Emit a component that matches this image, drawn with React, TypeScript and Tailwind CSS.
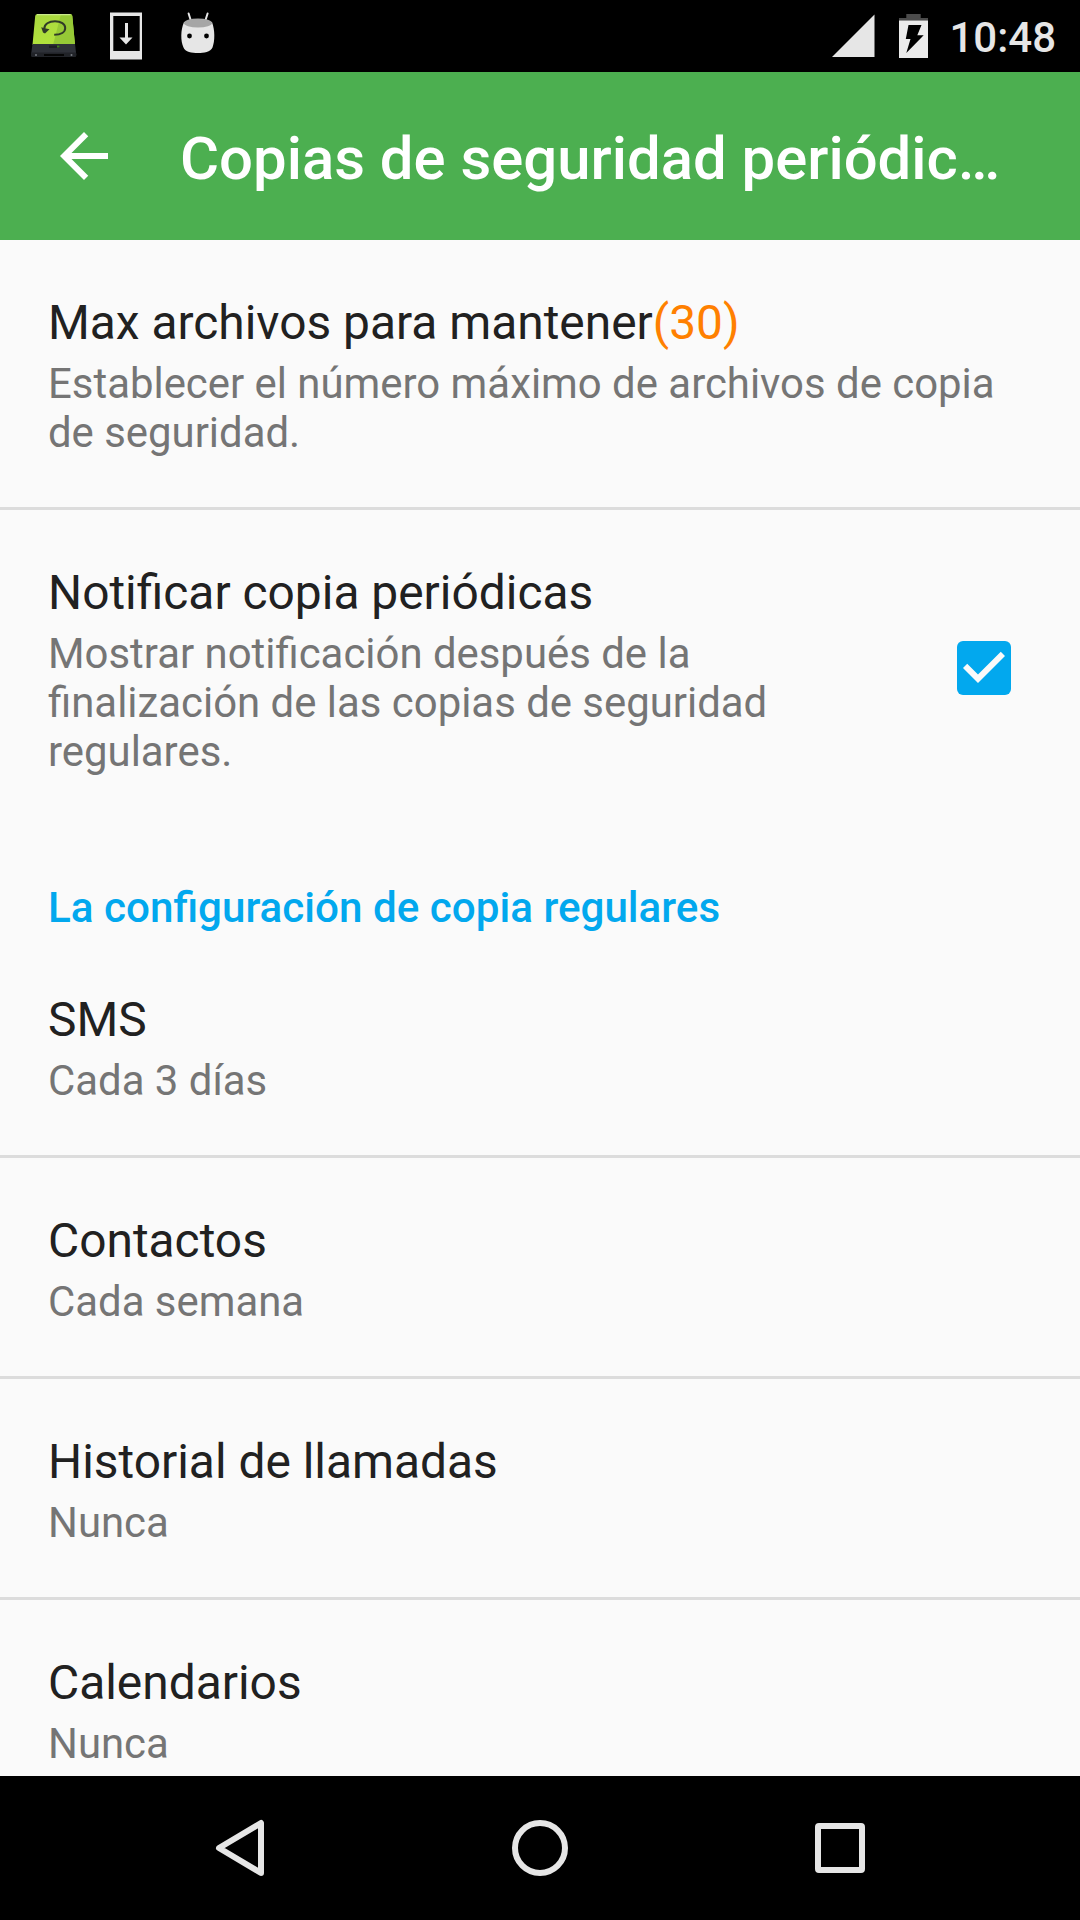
import type { ReactNode } from "react";

const schedules = [
  { title: "SMS", summary: "Cada 3 días" },
  { title: "Contactos", summary: "Cada semana" },
  { title: "Historial de llamadas", summary: "Nunca" },
  { title: "Calendarios", summary: "Nunca" },
];

const BackupDriveIcon = () => (
  <svg width="48" height="48" viewBox="0 0 48 48">
    <defs>
      <linearGradient id="drive" x1="0" y1="0" x2="0.3" y2="1">
        <stop offset="0" stopColor="#a9d83f" />
        <stop offset="1" stopColor="#b2e23c" />
      </linearGradient>
    </defs>
    <path d="M7.500 2h32.500q2 0 2.300 2l2.700 29H2.500L5.200 4q.3-2 2.300-2z" fill="url(#drive)" />
    <path d="M31 2h9q2 0 2.300 2l2.700 29H23z" fill="#96c936" />
    <path d="M7 2.700h33.500" stroke="#c9e98a" strokeWidth="1.300" />
    <path d="M2.500 32h42.500l1.300 11q0 2-2 2H3q-2 0-2-2z" fill="#2e3138" />
    <path d="M1.300 40.500h44.700l.3 2.500q0 2-2 2H3q-2 0-2-2z" fill="#212328" />
    <path d="M19 33.500h10.500v2.500H19z" fill="#1e2024" />
    <path d="M27 33.500h2.500v2H27z" fill="#3f7a1f" />
    <path d="M14 43h20" stroke="#050505" strokeWidth="2" />
    <circle cx="6" cy="43" r="1" fill="#777b82" />
    <circle cx="41.500" cy="43" r="1" fill="#777b82" />
    <path d="M14.200 17C14.200 12 19 9.200 25 9.200c6 0 10.200 3 10.200 6.800 0 4-4 6.800-11 6.800" fill="none" stroke="#303a28" strokeWidth="2" />
    <path d="M11.200 15.300l2.500.7 5.800 1.200-4.500 4.300-2-.9z" fill="#303a28" />
  </svg>
);

const DownloadIcon = () => (
  <svg width="34" height="48" viewBox="0 0 34 48">
    <path fillRule="evenodd" d="M0 .5h32v47H0zM3.300 4v35h26.400V4z" fill="#e6e6e6" />
    <path d="M15 11h3v14.500h4.500L16 32.500 9.500 25.500H15z" fill="#e6e6e6" />
  </svg>
);

const MarshmallowIcon = () => (
  <svg width="36" height="42" viewBox="0 0 36 42">
    <path d="M8.600 1.500L11 9M27.600 1.500L25.200 9" stroke="#e6e6e6" strokeWidth="2" strokeLinecap="round" />
    <path d="M4 10C.5 18 .5 29 3.500 35.500 5 40 12 41 18 41s12.500-1 14.500-5.500C35 29 35 18 32 10z" fill="#e6e6e6" />
    <ellipse cx="18" cy="11" rx="14" ry="4.500" fill="#a6a6a6" />
    <circle cx="9.500" cy="24" r="2.400" fill="#000" />
    <circle cx="26.500" cy="24" r="2.400" fill="#000" />
  </svg>
);

const StatusBar = () => (
  <header className="h-[72px] shrink-0 bg-black pl-[30px] pr-6 flex items-start justify-between">
    <div className="flex items-start pt-3">
      <BackupDriveIcon />
      <div className="ml-8">
        <DownloadIcon />
      </div>
      <div className="ml-9">
        <MarshmallowIcon />
      </div>
    </div>
    <div className="flex items-start">
      <svg className="mt-[14px]" width="43" height="43" viewBox="0 0 43 43">
        <path d="M0 43L42.500.5V43z" fill="#e6e6e6" />
      </svg>
      <svg className="mt-[14px] ml-6" width="29" height="44" viewBox="0 0 29 44">
        <path d="M7.300 0h14.400v4H29v2.700H0V4h7.300z" fill="#4b4b4b" />
        <path d="M0 6.500h29V44H0z" fill="#ebebeb" />
        <path d="M9.500 11h13l-4.200 10.200h6.400L7.300 39l4.200-14H6.800z" fill="#000" />
      </svg>
      <span className="ml-[21px] mt-[13px] text-[42px] leading-[49px] font-medium text-[#e6e6e6]">10:48</span>
    </div>
  </header>
);

const Toolbar = () => (
  <div className="h-[168px] shrink-0 bg-[#4caf50] flex items-center pl-12 text-white">
    <svg width="72" height="72" viewBox="0 0 24 24" fill="currentColor">
      <path d="M20 11H7.830l5.590-5.590L12 4l-8 8 8 8 1.410-1.410L7.830 13H20v-2z" />
    </svg>
    <h1 className="ml-[60px] mt-1.5 text-[59.850px] leading-[70px] font-medium whitespace-nowrap">
      Copias de seguridad periódic…
    </h1>
  </div>
);

interface PreferenceProps {
  title: ReactNode;
  summary: string;
  divider?: boolean;
  children?: ReactNode;
}

const Preference = ({ title, summary, divider = true, children }: PreferenceProps) => (
  <>
    <div className="flex items-center shrink-0 px-12 pt-[55px] pb-[50px]">
      <div className="flex-1">
        <div className="text-[47.880px] leading-[57px] text-[#212121]">{title}</div>
        <div className="mt-[7px] text-[41.900px] leading-[49px] text-[#757575]">{summary}</div>
      </div>
      {children}
    </div>
    {divider && <div className="h-[3px] shrink-0 bg-[#dcdcdc]" />}
  </>
);

const Checkbox = () => (
  <div className="w-24 ml-12 mb-[5px] flex justify-center">
    <div className="size-[54px] rounded-[6px] bg-[#02a8ee]">
      <svg width="54" height="54" viewBox="3 3 18 18" fill="#fafafa">
        <path d="M10 17l-5-5 1.410-1.410L10 14.170l7.590-7.590L19 8z" />
      </svg>
    </div>
  </div>
);

const NavigationBar = () => (
  <nav className="h-36 shrink-0 bg-black px-[90px] grid grid-cols-3 place-items-center">
    <svg width="60" height="60" viewBox="0 0 60 60" fill="none" stroke="#e6e6e6" strokeWidth="6" strokeLinejoin="round">
      <path d="M51 5v50L9 30z" />
    </svg>
    <svg width="60" height="60" viewBox="0 0 60 60" fill="none" stroke="#e6e6e6" strokeWidth="6">
      <circle cx="30" cy="30" r="25" />
    </svg>
    <svg width="60" height="60" viewBox="0 0 60 60" fill="none" stroke="#e6e6e6" strokeWidth="6">
      <rect x="8" y="8" width="44" height="44" rx="1" />
    </svg>
  </nav>
);

const App = () => {
  return (
    <div className="w-[1080px] h-[1920px] flex flex-col overflow-hidden bg-[#fafafa] font-['Roboto',sans-serif]">
      <StatusBar />
      <Toolbar />
      <main className="flex-1 min-h-0 overflow-hidden flex flex-col">
        <Preference
          title={
            <>
              Max archivos para mantener<span className="text-[#ff8000]">(30)</span>
            </>
          }
          summary="Establecer el número máximo de archivos de copia de seguridad."
        />
        <Preference
          title="Notificar copia periódicas"
          summary="Mostrar notificación después de la finalización de las copias de seguridad regulares."
          divider={false}
        >
          <Checkbox />
        </Preference>
        <h2 className="shrink-0 px-12 pt-[57px] pb-[5px] text-[42.180px] leading-[49px] font-medium text-[#02a8ee]">
          La configuración de copia regulares
        </h2>
        {schedules.map((item) => (
          <Preference key={item.title} title={item.title} summary={item.summary} />
        ))}
      </main>
      <NavigationBar />
    </div>
  );
};

export default App;
